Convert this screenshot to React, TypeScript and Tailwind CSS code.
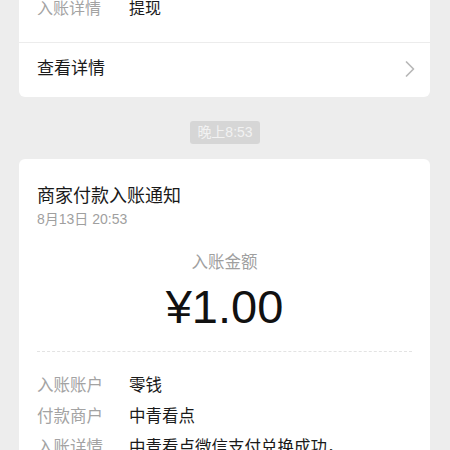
import { ChevronRight } from "lucide-react";

const font = {
  fontFamily:
    '"Liberation Sans", "Noto Sans CJK SC", "Noto Sans", sans-serif',
};

const rows = [
  { label: "入账账户", value: "零钱" },
  { label: "付款商户", value: "中青看点" },
  { label: "入账详情", value: "中青看点微信支付兑换成功，" },
];

const App = () => {
  return (
    <div
      className="w-[450px] h-[450px] overflow-hidden bg-[#ededed]"
      style={font}
    >
      {/* previous message (cut off at top) */}
      <div className="mx-[19px] w-[411px] -mt-[40px] bg-white rounded-md overflow-hidden">
        <div className="pt-[37px] pb-[21px] px-[18px] flex text-[16px] leading-[24px]">
          <span className="w-[92px] text-[#a3a3a3]">入账详情</span>
          <span className="text-[#1a1a1a]">提现</span>
        </div>
        <div className="h-px bg-[#ececec]" />
        <div className="h-[54px] pb-[3px] pl-[18px] pr-[6px] flex items-center justify-between">
          <span className="text-[17px] text-[#1a1a1a]">查看详情</span>
          <ChevronRight className="size-[28px] text-[#b8b8b8]" strokeWidth={1.5} />
        </div>
      </div>

      {/* time stamp */}
      <div className="flex justify-center mt-[24px]">
        <span className="h-[23px] px-[7px] flex items-center rounded-[3px] bg-[#d6d6d6] text-[14px] text-[#f2f2f2]">
          晚上8:53
        </span>
      </div>

      {/* notification card */}
      <div className="mx-[19px] w-[411px] mt-[15px] bg-white rounded-md px-[18px] pt-[24px]">
        <div className="text-[18px] leading-[26px] text-[#1a1a1a]">
          商家付款入账通知
        </div>
        <div className="text-[14px] leading-[20px] text-[#9f9f9f]">
          8月13日&nbsp;20:53
        </div>

        <div className="mt-[21px] text-center text-[16.5px] leading-[24px] text-[#9f9f9f]">
          入账金额
        </div>
        <div className="mt-[5px] text-center text-[47px] leading-[56px] text-[#111]">
          ¥1.00
        </div>

        <div className="mt-[16px] border-t border-dashed border-[#e3e3e3]" />

        <div className="pt-[18px] flex flex-col">
          {rows.map((r) => (
            <div key={r.label} className="flex h-[31px] items-center text-[16.5px]">
              <span className="w-[92px] text-[#a3a3a3]">{r.label}</span>
              <span className="text-[#1a1a1a]">{r.value}</span>
            </div>
          ))}
        </div>
      </div>
    </div>
  );
};

export default App;
